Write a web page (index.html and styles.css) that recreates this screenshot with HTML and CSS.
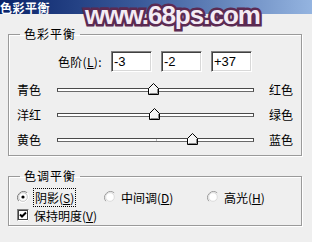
FILE: index.html
```html
<!DOCTYPE html>
<html>
<head>
<meta charset="utf-8">
<link rel="stylesheet" href="styles.css">
</head>
<body>
<div class="dialog">
  <div class="titlebar">
    <span class="title">色彩平衡</span>
    <span class="watermark">www.68ps.com</span>
  </div>

  <fieldset class="group group-balance">
    <legend>色彩平衡</legend>
    <div class="levels">
      <span class="levels-label">色阶(<u>L</u>):</span>
      <span class="field">-3</span>
      <span class="field">-2</span>
      <span class="field">+37</span>
    </div>
    <div class="slider-row">
      <span class="lbl">青色</span>
      <div class="track">
        <svg class="thumb" style="left:48.5%" width="11" height="12" viewBox="0 0 11 12"><polygon points="0.5,5.5 5.5,0.5 10.5,5.5 10.5,11.5 0.5,11.5" fill="#f4f4f4" stroke="#000"/><polyline points="1.5,10.5 1.5,5.9 5.5,1.9" fill="none" stroke="#fff"/><polyline points="1.5,10.5 9.5,10.5 9.5,6" fill="none" stroke="#888"/></svg>
      </div>
      <span class="lbl rlbl">红色</span>
    </div>
    <div class="slider-row">
      <span class="lbl">洋红</span>
      <div class="track">
        <svg class="thumb" style="left:49%" width="11" height="12" viewBox="0 0 11 12"><polygon points="0.5,5.5 5.5,0.5 10.5,5.5 10.5,11.5 0.5,11.5" fill="#f4f4f4" stroke="#000"/><polyline points="1.5,10.5 1.5,5.9 5.5,1.9" fill="none" stroke="#fff"/><polyline points="1.5,10.5 9.5,10.5 9.5,6" fill="none" stroke="#888"/></svg>
      </div>
      <span class="lbl rlbl">绿色</span>
    </div>
    <div class="slider-row">
      <span class="lbl">黄色</span>
      <div class="track">
        <span class="tick"></span>
        <svg class="thumb" style="left:68.5%" width="11" height="12" viewBox="0 0 11 12"><polygon points="0.5,5.5 5.5,0.5 10.5,5.5 10.5,11.5 0.5,11.5" fill="#f4f4f4" stroke="#000"/><polyline points="1.5,10.5 1.5,5.9 5.5,1.9" fill="none" stroke="#fff"/><polyline points="1.5,10.5 9.5,10.5 9.5,6" fill="none" stroke="#888"/></svg>
      </div>
      <span class="lbl rlbl">蓝色</span>
    </div>
  </fieldset>

  <fieldset class="group group-tone">
    <legend>色调平衡</legend>
    <div class="radio-row">
      <span class="opt opt-shadow">
        <svg class="radio" width="12" height="12" viewBox="0 0 12 12"><path d="M10.2,1.8 A6,6 0 0 0 1.8,10.2" fill="none" stroke="#808080"/><path d="M1.8,10.2 A6,6 0 0 0 10.2,1.8" fill="none" stroke="#fff"/><circle cx="6" cy="6" r="4.3" fill="#fff" stroke="#c8c8c8"/><circle cx="6" cy="6" r="1.6" fill="#000"/></svg>
        <span class="focus">阴影(<u>S</u>)</span>
      </span>
      <span class="opt opt-mid">
        <svg class="radio" width="12" height="12" viewBox="0 0 12 12"><path d="M10.2,1.8 A6,6 0 0 0 1.8,10.2" fill="none" stroke="#a0a0a0"/><circle cx="6" cy="6" r="4.3" fill="#fff" stroke="#dcdcdc"/></svg>
        <span>中间调(<u>D</u>)</span>
      </span>
      <span class="opt">
        <svg class="radio" width="12" height="12" viewBox="0 0 12 12"><path d="M10.2,1.8 A6,6 0 0 0 1.8,10.2" fill="none" stroke="#a0a0a0"/><circle cx="6" cy="6" r="4.3" fill="#fff" stroke="#dcdcdc"/></svg>
        <span>高光(<u>H</u>)</span>
      </span>
    </div>
    <div class="check-row">
      <svg class="check" width="12" height="12" viewBox="0 0 12 12"><rect x="0.5" y="0.5" width="11" height="11" fill="#fff" stroke="#808080"/><polyline points="11.5,0.5 11.5,11.5 0.5,11.5" fill="none" stroke="#fff"/><rect x="1.5" y="1.5" width="9" height="9" fill="#fff" stroke="#404040" stroke-width="1"/><polyline points="3,5.5 5,7.5 9,3.5" fill="none" stroke="#000" stroke-width="2"/></svg>
      <span>保持明度(<u>V</u>)</span>
    </div>
  </fieldset>
</div>
</body>
</html>
```

FILE: styles.css
```css
html, body {
  margin: 0;
  padding: 0;
}
body {
  width: 312px;
  height: 242px;
  overflow: hidden;
  background: #efefef;
  font-family: "Noto Sans CJK SC", "Liberation Sans", sans-serif;
  font-size: 12px;
  color: #000;
}
.dialog {
  position: relative;
  width: 312px;
  height: 242px;
}
.titlebar {
  height: 14px;
  background: linear-gradient(to right, #0a246a 0%, #3a5a9a 45%, #94b4e0 100%);
  display: flex;
  align-items: center;
}
.title {
  color: #fff;
  font-weight: bold;
  font-size: 12px;
  line-height: 13px;
  letter-spacing: 0.5px;
}
.watermark {
  position: absolute;
  left: 85px;
  top: 0px;
  font-family: "Liberation Sans", sans-serif;
  font-weight: bold;
  font-size: 26px;
  line-height: 30px;
  letter-spacing: -1px;
  color: #f4ecf4;
  -webkit-text-stroke: 5px #5b2a52;
  paint-order: stroke fill;
}
.group {
  border: 1px solid #9a9a9a;
  box-shadow: inset 1px 1px 0 #fff, 1px 1px 0 #fff;
  margin: 0 10px 0 8px;
  padding: 0;
  min-width: 0;
}
.group legend {
  padding: 0 4px;
  margin-left: 11px;
  line-height: 14px;
  height: 14px;
  letter-spacing: 1px;
}
.group-balance {
  margin-top: 13px;
  padding: 10px 0 3px 0;
}
.levels {
  display: flex;
  align-items: center;
  height: 21px;
  padding-left: 49px;
}
.levels-label {
  width: 53px;
  letter-spacing: 0.3px;
}
.field {
  box-sizing: border-box;
  width: 41px;
  height: 21px;
  margin-right: 9px;
  background: #fff;
  border-top: 1px solid #808080;
  border-left: 1px solid #808080;
  border-right: 1px solid #fff;
  border-bottom: 1px solid #fff;
  box-shadow: inset 1px 1px 0 #404040, inset -1px -1px 0 #d8d8d8;
  font-family: "Liberation Sans", sans-serif;
  font-size: 13px;
  line-height: 19px;
  padding-left: 2px;
}
.slider-row {
  display: grid;
  grid-template-columns: 40px 197px 1fr;
  align-items: center;
  height: 25px;
  padding-left: 8px;
}
.levels + .slider-row {
  margin-top: 5px;
}
.lbl {
  line-height: 14px;
  white-space: nowrap;
}
.rlbl {
  padding-left: 15px;
}
.track {
  position: relative;
  box-sizing: border-box;
  height: 4px;
  background: #fff;
  border: 1px solid #4a4a4a;
  border-bottom-color: #6a6a6a;
}
.tick {
  position: absolute;
  left: 98px;
  top: 0;
  width: 1px;
  height: 2px;
  background: #bbb;
}
.thumb {
  position: absolute;
  top: -6px;
  margin-left: -5px;
  display: block;
}
.group-tone {
  margin-top: 13px;
  padding: 6px 0 2px 0;
}
.radio-row {
  display: flex;
  align-items: center;
  height: 16px;
  padding-left: 8px;
}
.opt {
  display: flex;
  align-items: center;
  gap: 5px;
}
.opt-shadow {
  width: 87px;
}
.opt-mid {
  width: 103px;
}
.radio {
  display: block;
  flex: none;
}
.focus {
  outline: 1px dotted #000;
  outline-offset: 0;
  padding: 0 1px;
}
.check-row {
  display: flex;
  align-items: center;
  gap: 5px;
  height: 16px;
  margin-top: 2px;
  padding-left: 8px;
}
.check {
  display: block;
  flex: none;
}
u {
  text-decoration: underline;
  text-underline-offset: 1px;
}
```
